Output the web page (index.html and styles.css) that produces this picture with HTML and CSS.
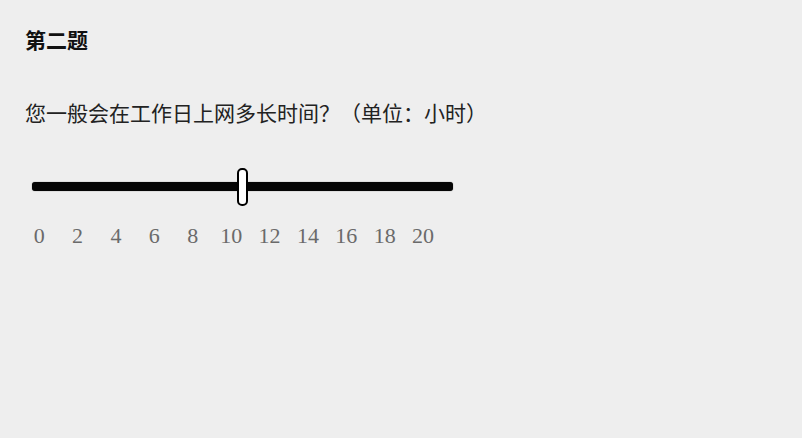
FILE: index.html
```html
<!DOCTYPE html>
<html lang="zh">
<head>
<meta charset="utf-8">
<title>第二题</title>
<link rel="stylesheet" href="styles.css">
</head>
<body>
<div class="page">
  <h2 class="title">第二题</h2>
  <p class="question">您一般会在工作日上网多长时间？（单位：小时）</p>
  <div class="slider">
    <div class="track">
      <div class="thumb" style="left: 205px"></div>
    </div>
    <div class="ticks">
      <span>0</span><span>2</span><span>4</span><span>6</span><span>8</span><span>10</span><span>12</span><span>14</span><span>16</span><span>18</span><span>20</span>
    </div>
  </div>
</div>
</body>
</html>
```
FILE: styles.css
```css
html, body {
  margin: 0;
  padding: 0;
  background: #eeeeee;
}
.page {
  padding: 27px 25px 0 25px;
  font-family: "Noto Sans CJK SC", "Noto Sans", sans-serif;
}
.title {
  margin: 0;
  font-size: 21px;
  line-height: 24px;
  font-weight: bold;
  color: #111;
}
.question {
  margin: 49px 0 0 0;
  font-size: 21px;
  line-height: 24px;
  color: #222;
}
.slider {
  margin-top: 58px;
  padding-left: 7px;
}
.track {
  position: relative;
  width: 421px;
  height: 9px;
  background: #050505;
  border-radius: 3px;
  box-shadow: 0 0 1px #555;
}
.thumb {
  position: absolute;
  top: -14px;
  width: 7px;
  height: 34px;
  background: #fff;
  border: 2px solid #000;
  border-radius: 5px;
}
.ticks {
  display: flex;
  margin-top: 33px;
  margin-left: -12px;
  font-family: "Liberation Serif", "DejaVu Serif", serif;
  font-size: 22px;
  line-height: 24px;
  color: #6a6a6a;
}
.ticks span {
  width: 38.4px;
  text-align: center;
}
```
